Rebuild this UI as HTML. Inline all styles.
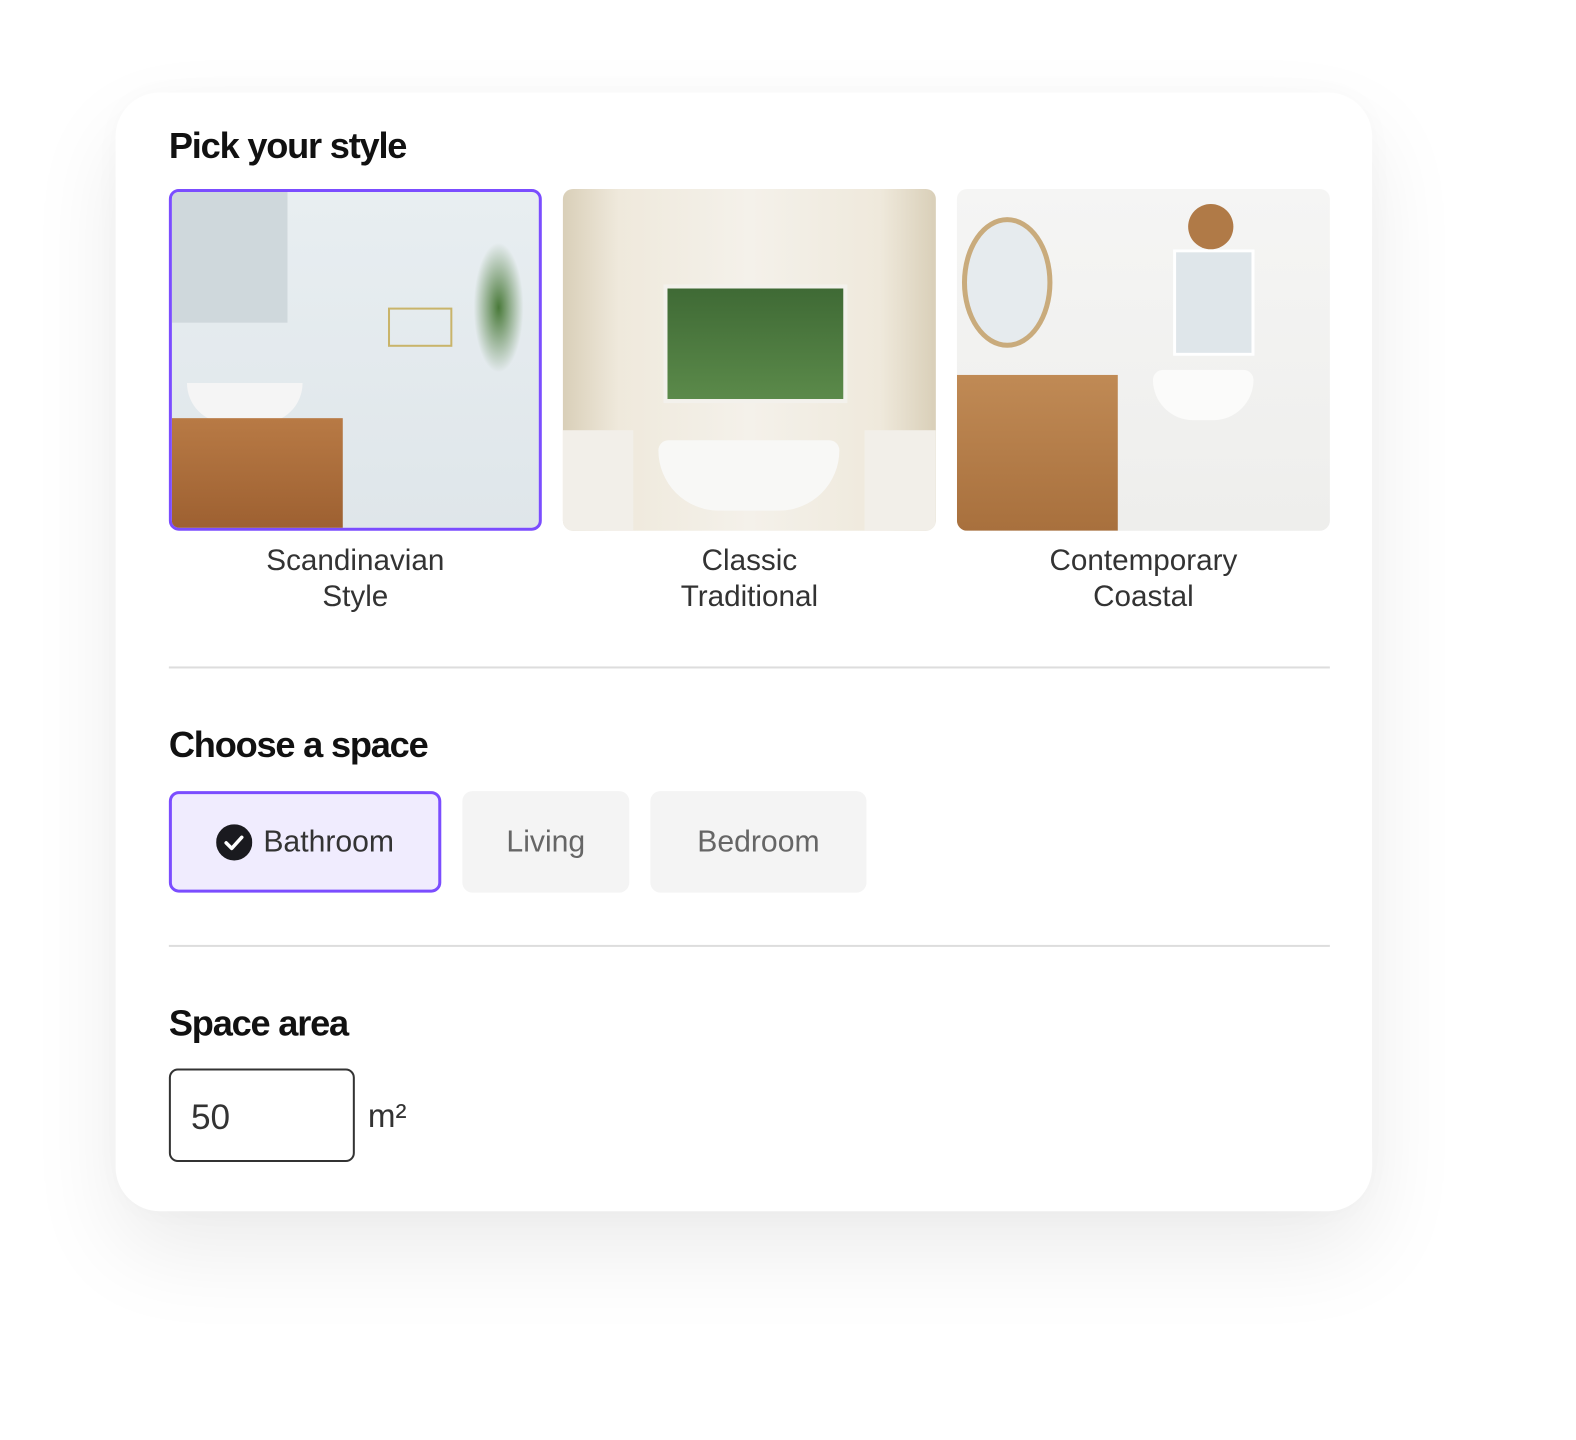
<!DOCTYPE html>
<html><head><style>
body{margin:0;width:1576px;height:1440px;background:#fff;font-family:"Liberation Sans",sans-serif;position:relative;overflow:hidden}
#w{position:absolute;left:0;top:0;width:1560px;height:1426px;transform:scale(1.0052);transform-origin:0 0}
.card{position:absolute;left:115px;top:92px;width:1250px;height:1113px;background:#fff;border-radius:44px;box-shadow:0 40px 90px rgba(0,0,0,0.08),0 0 40px rgba(0,0,0,0.03)}
h2{position:absolute;margin:0;font-size:36px;font-weight:bold;letter-spacing:-1.2px;color:#111}
.img{position:absolute;top:188px;width:371px;height:340px;border-radius:10px;overflow:hidden}
.cap{position:absolute;top:540px;width:371px;text-align:center;font-size:29.5px;line-height:36px;color:#333}
.hr{position:absolute;left:168px;width:1155px;height:2px;background:#ddd}
.btn{position:absolute;top:787px;height:101px;border-radius:10px;background:#f4f4f4;color:#666;font-size:30px;display:flex;align-items:center;justify-content:center;box-sizing:border-box}
</style></head><body><div id="w">
<div class="card"></div>
<h2 style="left:168px;top:124px">Pick your style</h2>
<div class="img" style="left:168px;border:3px solid #7b4dff;box-sizing:border-box;background:linear-gradient(#e8eef1,#dfe6ea)">
 <div style="position:absolute;left:0;top:0;width:115px;height:130px;background:#cfd8dc"></div>
 <div style="position:absolute;left:215px;top:115px;width:60px;height:35px;border:2px solid #c9b46a"></div>
 <div style="position:absolute;left:15px;top:190px;width:115px;height:40px;background:#f5f5f5;border-radius:0 0 50px 50px"></div>
 <div style="position:absolute;left:0;top:225px;width:170px;height:115px;background:linear-gradient(#b87a45,#9c5f30)"></div>
 <div style="position:absolute;left:300px;top:50px;width:50px;height:130px;background:radial-gradient(#4a7a3a,transparent 70%)"></div>
</div>
<div class="img" style="left:560px;background:linear-gradient(90deg,#d9cfb8,#efe9dc 15%,#f4f1ea 50%,#efe9dc 85%,#d9cfb8)">
 <div style="position:absolute;left:100px;top:95px;width:175px;height:110px;background:linear-gradient(#3f6a35,#5b8a4a);border:4px solid #f3f1ec"></div>
 <div style="position:absolute;left:95px;top:250px;width:180px;height:70px;background:#f8f8f6;border-radius:10px 10px 60px 60px"></div>
 <div style="position:absolute;left:0;top:240px;width:70px;height:100px;background:#f2efe9"></div>
 <div style="position:absolute;left:300px;top:240px;width:71px;height:100px;background:#f2efe9"></div>
</div>
<div class="img" style="left:952px;background:linear-gradient(#f5f5f4,#eeeeec)">
 <div style="position:absolute;left:5px;top:28px;width:80px;height:120px;border:5px solid #c9ab7c;border-radius:50%;background:#e6ebee"></div>
 <div style="position:absolute;left:215px;top:60px;width:75px;height:100px;background:#dfe6ea;border:3px solid #fff"></div>
 <div style="position:absolute;left:230px;top:15px;width:45px;height:45px;border-radius:50%;background:#b07a47"></div>
 <div style="position:absolute;left:0;top:185px;width:160px;height:155px;background:linear-gradient(#c08a55,#a8703d)"></div>
 <div style="position:absolute;left:195px;top:180px;width:100px;height:50px;background:#fbfbfa;border-radius:10px 10px 40px 40px"></div>
</div>
<div class="cap" style="left:168px">Scandinavian<br>Style</div>
<div class="cap" style="left:560px">Classic<br>Traditional</div>
<div class="cap" style="left:952px">Contemporary<br>Coastal</div>
<div class="hr" style="top:663px"></div>
<h2 style="left:168px;top:720px">Choose a space</h2>
<div class="btn" style="left:168px;width:271px;background:#f0ecfe;border:3px solid #7b4dff;color:#333">
 <svg width="36" height="36" viewBox="0 0 36 36" style="margin-right:11px"><circle cx="18" cy="18" r="18" fill="#1a1a1f"/><path d="M10 18.5l5.5 5.5 10-11" stroke="#fff" stroke-width="3.5" fill="none" stroke-linecap="round" stroke-linejoin="round"/></svg>Bathroom</div>
<div class="btn" style="left:460px;width:166px">Living</div>
<div class="btn" style="left:647px;width:215px">Bedroom</div>
<div class="hr" style="top:940px"></div>
<h2 style="left:168px;top:997px">Space area</h2>
<div style="position:absolute;left:168px;top:1063px;width:185px;height:93px;border:2px solid #333;border-radius:9px;box-sizing:border-box;font-size:35px;color:#333;padding:27px 0 0 20px">50</div>
<div style="position:absolute;left:366px;top:1091px;font-size:33px;color:#333">m²</div>
</div></body></html>
